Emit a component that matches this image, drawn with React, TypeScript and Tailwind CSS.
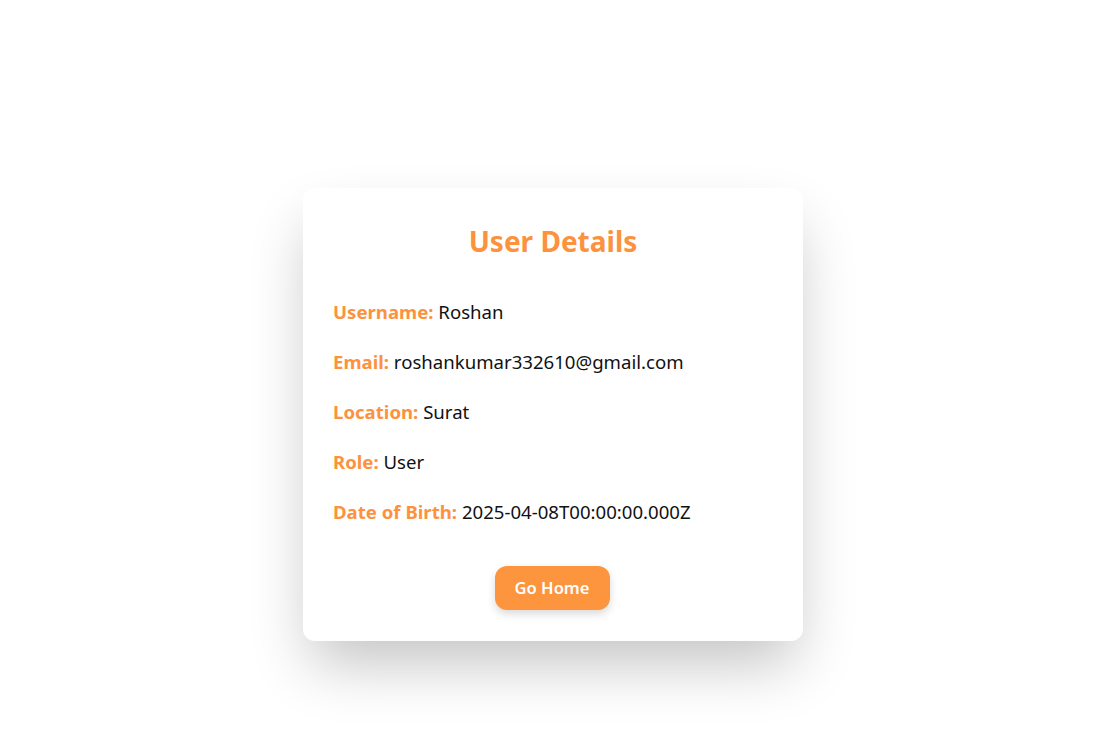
import React from "react";

const rows: [string, string][] = [
  ["Username:", "Roshan"],
  ["Email:", "roshankumar332610@gmail.com"],
  ["Location:", "Surat"],
  ["Role:", "User"],
  ["Date of Birth:", "2025-04-08T00:00:00.000Z"],
];

export default function App() {
  return (
    <div
      className="min-h-screen w-full bg-white pt-[188px]"
      style={{ fontFamily: "'Noto Sans', 'Open Sans', sans-serif" }}
    >
      <div className="ml-[303px] w-[500px] rounded-xl bg-white px-[30px] pt-[30px] pb-[31px] shadow-[0_30px_60px_-8px_rgba(0,0,0,0.24)]">
        <h2 className="text-center text-[28px] font-bold leading-[46px] text-[#fd923e]">
          User Details
        </h2>
        <div className="mt-[34px] flex flex-col gap-[22px]">
          {rows.map(([k, v]) => (
            <p key={k} className="text-[18.6px] leading-[28px] text-[#111]">
              <span className="font-bold text-[#fd923e]">{k}</span> {v}
            </p>
          ))}
        </div>
        <div className="mt-[40px] flex justify-center">
          <button className="-ml-[2px] h-[44px] w-[115px] rounded-xl bg-[#fd943e] text-[16.6px] font-semibold text-white shadow-[0_4px_8px_rgba(0,0,0,0.15)]">
            Go Home
          </button>
        </div>
      </div>
    </div>
  );
}
